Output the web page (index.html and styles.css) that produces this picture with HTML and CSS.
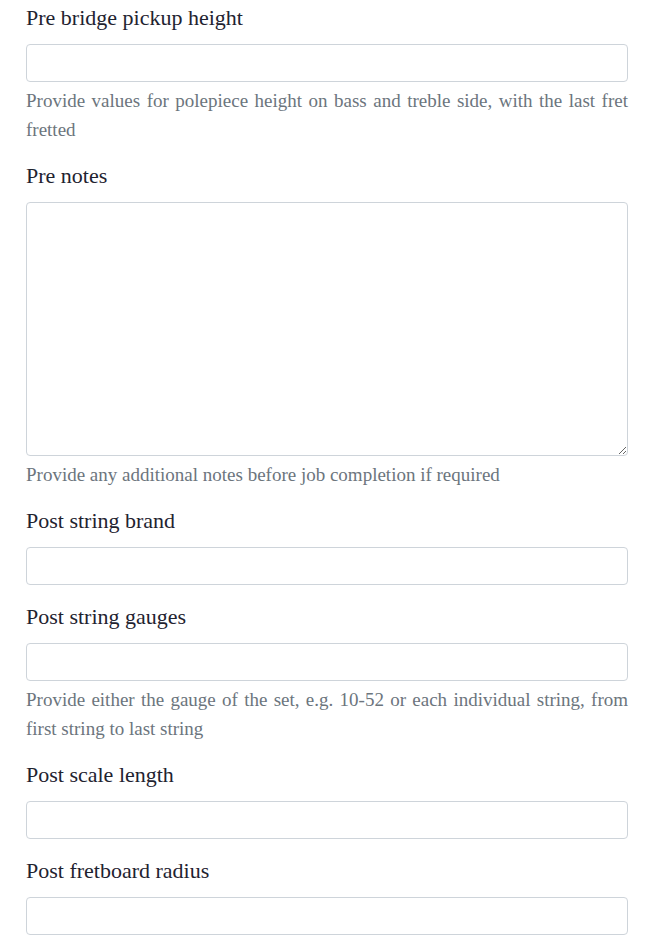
FILE: index.html
```html
<!DOCTYPE html>
<html>
<head>
<meta charset="utf-8">
<link rel="stylesheet" href="styles.css">
</head>
<body>
<form class="form">
  <div class="group">
    <label class="label">Pre bridge pickup height</label>
    <input class="control" type="text">
    <p class="help">Provide values for polepiece height on bass and treble side, with the last fret fretted</p>
  </div>
  <div class="group">
    <label class="label">Pre notes</label>
    <textarea class="control area"></textarea>
    <p class="help">Provide any additional notes before job completion if required</p>
  </div>
  <div class="group">
    <label class="label">Post string brand</label>
    <input class="control" type="text">
  </div>
  <div class="group">
    <label class="label">Post string gauges</label>
    <input class="control" type="text">
    <p class="help">Provide either the gauge of the set, e.g. 10-52 or each individual string, from first string to last string</p>
  </div>
  <div class="group">
    <label class="label">Post scale length</label>
    <input class="control" type="text">
  </div>
  <div class="group">
    <label class="label">Post fretboard radius</label>
    <input class="control" type="text">
  </div>
</form>
</body>
</html>
```
FILE: styles.css
```css
html, body {
  margin: 0;
  padding: 0;
  background: #fff;
}
body {
  font-family: "Liberation Serif", "Times New Roman", serif;
  color: #212529;
}
.form {
  padding: 3px 29px 0 26px;
}
.group {
  margin-bottom: 17px;
}
.label {
  display: block;
  font-size: 22px;
  line-height: 30px;
  margin-bottom: 11px;
  color: #1f2330;
}
.control {
  display: block;
  box-sizing: border-box;
  width: 100%;
  height: 38px;
  margin: 0;
  padding: 6px 12px;
  border: 1px solid #ced4da;
  border-radius: 4px;
  background: #fff;
  font: inherit;
}
.area {
  height: 254px;
  resize: vertical;
}
.help {
  margin: 4px 0 0;
  font-size: 19px;
  line-height: 29px;
  color: #6c757d;
  text-align: justify;
}
```
